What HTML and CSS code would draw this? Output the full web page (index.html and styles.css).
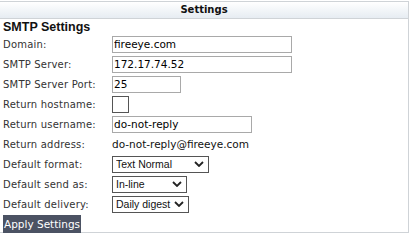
FILE: index.html
```html
<!DOCTYPE html>
<html lang="en">
<head>
    <meta charset="UTF-8">
    <title>Settings</title>
    <link rel="stylesheet" href="styles.css">
</head>
<body>
    <div class="panel">
        <div class="panel-head">Settings</div>
        <div class="panel-body">
            <h2>SMTP Settings</h2>
            <table class="form">
                <tr>
                    <td class="label">Domain:</td>
                    <td><input type="text" class="txt wide" value="fireeye.com"></td>
                </tr>
                <tr>
                    <td class="label">SMTP Server:</td>
                    <td><input type="text" class="txt wide" value="172.17.74.52"></td>
                </tr>
                <tr>
                    <td class="label">SMTP Server Port:</td>
                    <td><input type="text" class="txt short" value="25"></td>
                </tr>
                <tr>
                    <td class="label">Return hostname:</td>
                    <td><span class="check"></span></td>
                </tr>
                <tr>
                    <td class="label">Return username:</td>
                    <td><input type="text" class="txt mid" value="do-not-reply"></td>
                </tr>
                <tr>
                    <td class="label">Return address:</td>
                    <td class="value">do-not-reply@fireeye.com</td>
                </tr>
                <tr>
                    <td class="label">Default format:</td>
                    <td>
                        <span class="sel sel-format">
                            <select><option>Text Normal</option></select>
                            <svg viewBox="0 0 10 6"><path d="M1 1l4 4 4-4" /></svg>
                        </span>
                    </td>
                </tr>
                <tr>
                    <td class="label">Default send as:</td>
                    <td>
                        <span class="sel sel-send">
                            <select><option>In-line</option></select>
                            <svg viewBox="0 0 10 6"><path d="M1 1l4 4 4-4" /></svg>
                        </span>
                    </td>
                </tr>
                <tr>
                    <td class="label">Default delivery:</td>
                    <td>
                        <span class="sel sel-delivery">
                            <select><option>Daily digest</option></select>
                            <svg viewBox="0 0 10 6"><path d="M1 1l4 4 4-4" /></svg>
                        </span>
                    </td>
                </tr>
            </table>
            <button class="apply">Apply Settings</button>
        </div>
    </div>
</body>
</html>
```

FILE: styles.css
```css
html {
    background: #ffffff;
}
body {
    margin: 0;
    padding: 1px 0 0 0;
    font-family: "DejaVu Sans", Verdana, sans-serif;
    font-size: 10px;
    color: #333333;
}

.panel {
    width: 408px;
    border: 1px solid #cfd3d7;
    border-left: none;
    height: 230px;
}
.panel-head {
    height: 16px;
    line-height: 16px;
    text-align: center;
    font-weight: bold;
    font-size: 10px;
    color: #111111;
    background: linear-gradient(#ffffff, #e6ecf2);
    border-bottom: 1px solid #cfd3d7;
}
.panel-body {
    padding: 1px 3px 0 3px;
}

h2 {
    margin: 0;
    font-size: 12.5px;
    font-family: "Liberation Sans", Arial, sans-serif;
    color: #111111;
    line-height: 14px;
}

.form {
    border-collapse: collapse;
}
.form td {
    padding: 0;
    height: 20px;
}
.form td.label {
    width: 109px;
    white-space: nowrap;
    letter-spacing: 0.2px;
}
.value {
    color: #111111;
    font-size: 10.5px;
}

.txt {
    box-sizing: border-box;
    height: 17px;
    border: 1px solid #a9a9a9;
    padding: 0 1px;
    font-family: "DejaVu Sans", Verdana, sans-serif;
    font-size: 10.5px;
    color: #000000;
    outline: none;
}
.wide { width: 180px; }
.mid { width: 140px; }
.short { width: 69px; }

.check {
    display: inline-block;
    width: 15px;
    height: 15px;
    border: 1px solid #555555;
    vertical-align: middle;
    background: #ffffff;
}

.sel {
    position: relative;
    display: inline-block;
    vertical-align: middle;
}
.sel select {
    appearance: none;
    -webkit-appearance: none;
    box-sizing: border-box;
    height: 17px;
    border: 1px solid #555555;
    border-radius: 0;
    background: #ffffff;
    padding: 0 0 0 3px;
    font-family: "Liberation Sans", Arial, sans-serif;
    font-size: 10.5px;
    color: #111111;
    display: block;
}
.sel svg {
    position: absolute;
    right: 5px;
    top: 5px;
    width: 10px;
    height: 6px;
    pointer-events: none;
}
.sel svg path {
    fill: none;
    stroke: #222222;
    stroke-width: 1.8;
}
.sel-format select { width: 97px; }
.sel-send select { width: 75px; }
.sel-delivery select { width: 77px; }

.apply {
    margin-top: 1px;
    height: 18px;
    padding: 0 1px;
    border: none;
    background: #4b5263;
    color: #ffffff;
    font-family: "DejaVu Sans", Verdana, sans-serif;
    font-size: 10.5px;
    cursor: pointer;
}
```
